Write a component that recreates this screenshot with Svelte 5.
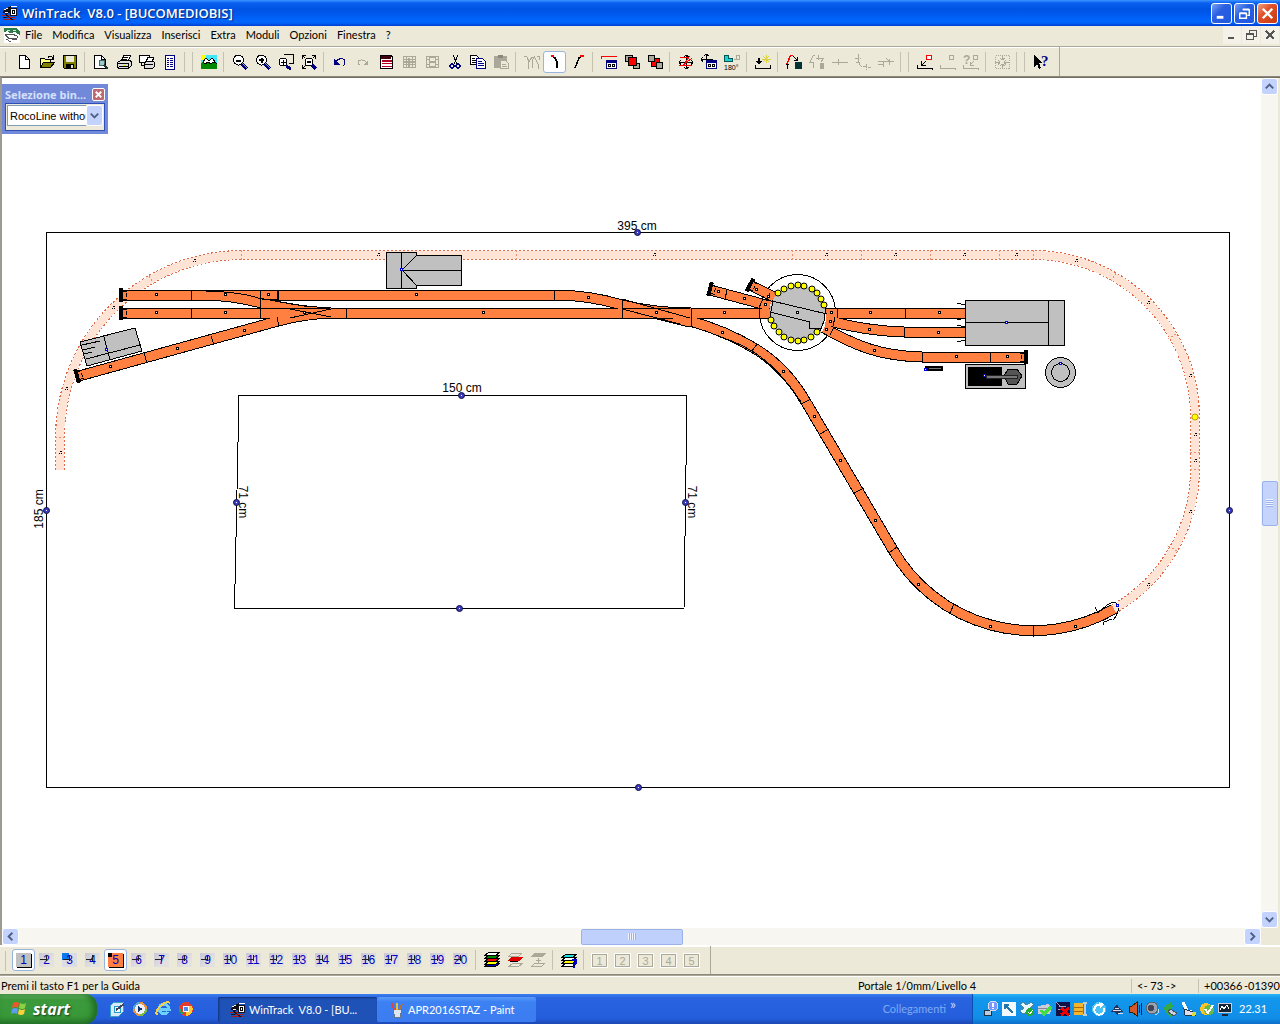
<script lang="ts">
	type Tool = { icon: string; label: string; active?: boolean } | null;

	const menus = ['File', 'Modifica', 'Visualizza', 'Inserisci', 'Extra', 'Moduli', 'Opzioni', 'Finestra', '?'];

	// null is a separator
	const tools: Tool[] = [
		{ icon: 'new', label: 'Nuovo' },
		{ icon: 'open', label: 'Apri' },
		{ icon: 'save', label: 'Salva' },
		null,
		{ icon: 'preview', label: 'Anteprima' },
		{ icon: 'print', label: 'Stampa' },
		{ icon: 'printView', label: 'Stampa vista' },
		{ icon: 'list', label: 'Elenco' },
		null,
		null,
		{ icon: 'landscape', label: 'Vista 3D' },
		null,
		{ icon: 'zoomOut', label: 'Riduci' },
		{ icon: 'zoomIn', label: 'Ingrandisci' },
		{ icon: 'zoomArea', label: 'Zoom area' },
		{ icon: 'zoomAll', label: 'Zoom tutto' },
		null,
		{ icon: 'undo', label: 'Annulla' },
		{ icon: 'redo', label: 'Ripeti' },
		{ icon: 'props', label: 'Caratteristiche' },
		{ icon: 'film', label: 'Dividi' },
		{ icon: 'film2', label: 'Unisci' },
		{ icon: 'cut', label: 'Taglia' },
		{ icon: 'copy', label: 'Copia' },
		{ icon: 'paste', label: 'Incolla' },
		null,
		{ icon: 'branches', label: 'Deviatoio' },
		{ icon: 'curveL', label: 'Curva a sinistra', active: true },
		{ icon: 'curveR', label: 'Curva a destra' },
		null,
		{ icon: 'dialog', label: 'Dialogo' },
		{ icon: 'front', label: 'In primo piano' },
		{ icon: 'back', label: 'In secondo piano' },
		null,
		{ icon: 'move', label: 'Sposta' },
		{ icon: 'moveTo', label: 'Sposta a' },
		{ icon: 'rotate', label: 'Ruota' },
		null,
		{ icon: 'connect', label: 'Collega' },
		null,
		{ icon: 'gap', label: 'Chiudi spazio' },
		{ icon: 'gapOff', label: 'Chiudi' },
		{ icon: 'line', label: 'Linea' },
		{ icon: 'bend', label: 'Piega' },
		{ icon: 'shift', label: 'Trasla' },
		null,
		null,
		{ icon: 'height', label: 'Altezza' },
		{ icon: 'heightOff', label: 'Togli altezza' },
		{ icon: 'heightAsk', label: 'Verifica altezza' },
		null,
		{ icon: 'center', label: 'Centra' },
		null,
		null,
		{ icon: 'help', label: 'Guida' }
	];

	const zoomLens =
		'<circle cx="6.500" cy="6" r="5" fill="#fff" stroke="#000"/><path d="M10 10l5 5" stroke="#000080" stroke-width="3"/><path d="M10 9l5 5" stroke="#8aa" />';
	const window16 =
		'<rect x="5.500" y="6.500" width="10" height="8" fill="#fff" stroke="#000080"/><path d="M5 7h11v2H5z" fill="#000080"/><path d="M7.500 10.500h2v2h-2zM11.500 10.500h2v2h-2z" fill="none" stroke="#000"/>';
	const film =
		'<path d="M2.500 2.500h12v11h-12zM2 5.500h13M2 10.500h13M5.500 2v12M11.500 2v12" fill="none" stroke="#aca899"/>';

	const icons: Record<string, string> = {
		new: '<path d="M3.500 1.500h6l4 4v9h-10z" fill="#fff" stroke="#000"/><path d="M9.500 1.500v4h4" fill="none" stroke="#000"/>',
		open: '<path d="M1.500 13.500v-9h4l1 1h5v3" fill="#ffff80" stroke="#000"/><path d="M1.500 13.500l3-5h11l-4 5z" fill="#808000" stroke="#000"/><path d="M9 3.500c1-2 3-2 5 1M14.500 1v4h-4" fill="none" stroke="#000"/>',
		save: '<path d="M1.500 1.500h13v13h-12l-1-1z" fill="#808000" stroke="#000"/><path d="M4 2h8v6H4z" fill="#ece9d8"/><path d="M4 10h8v4H4z" fill="#000"/><path d="M9 11h2v3H9z" fill="#ddd"/>',
		preview:
			'<path d="M1.500 1.500h7l4 4v9h-11z" fill="#fff" stroke="#000"/><path d="M8.500 1.500v4h4" fill="none" stroke="#000"/><circle cx="9" cy="9" r="3" fill="#9cc" stroke="#466"/><path d="M11 11l4 4" stroke="#233" stroke-width="2"/>',
		print:
			'<path d="M5.500 6.500l2-5h7l-2 5" fill="#fff" stroke="#000"/><path d="M7 3.500h5M6 5.500h5" stroke="#000"/><path d="M1.500 8.500l3-2h9l2 1v4l-3 3h-10l-1-2z" fill="#ddd" stroke="#000"/><path d="M2 9.500h10v4M3 12.500h9" fill="none" stroke="#000"/><path d="M8 11h2v1H8z" fill="#dd0"/>',
		printView:
			'<path d="M.500 1.500h10v7h-10z" fill="#fff" stroke="#000"/><path d="M2.500 8v3h3" fill="none" stroke="#000"/><path d="M7.500 7.500l1-4h6l-1 4" fill="#fff" stroke="#000"/><path d="M5.500 8.500l2-1h7l1 1v4l-2 2h-8z" fill="#ddd" stroke="#000"/><path d="M6 10.500h8" stroke="#000"/>',
		list: '<path d="M3.500 1.500h9v14h-9z" fill="#fff" stroke="#000080"/><path d="M5 4.500h2M8 4.500h3M5 6.500h2M8 6.500h3M5 8.500h2M8 8.500h3M5 10.500h2M8 10.500h3M5 12.500h2M8 12.500h3" stroke="#000080"/>',
		landscape:
			'<path d="M0 1h16v14H0z" fill="#3ee8f8"/><path d="M0 1h5v3L3 6H0z" fill="#ff0"/><path d="M0 9l2-1 3-4 3 3 3-3 5 6v5H0z" fill="#080"/><path d="M2 8l3-4 3 3 3-3 4 5-3-1-2 2-3-2-3 2z" fill="#fff" stroke="#000"/>',
		zoomOut: zoomLens + '<path d="M4 6.500h5" stroke="#000" stroke-width="2"/>',
		zoomIn: zoomLens + '<path d="M4 6h5M6.500 3.500v5" stroke="#000" stroke-width="2"/>',
		zoomArea:
			'<path d="M6 .500h9.500v9H11" fill="none" stroke="#000"/><circle cx="5" cy="8" r="4" fill="#fff" stroke="#000"/><path d="M3 8.500h5M5.500 6v5" stroke="#000"/><path d="M8 12l5 3" stroke="#000080" stroke-width="3"/>',
		zoomAll:
			'<circle cx="8" cy="8" r="4" fill="#fff" stroke="#000"/><path d="M6 8h4" stroke="#000" stroke-width="2"/><path d="M11 11l4 4" stroke="#000080" stroke-width="3"/><path d="M1.500 5V1.500H5M1.500 1.500l3 3M11 1.500h3.500V5M14.500 1.500l-3 3M1.500 11v3.500H5M1.500 14.500l3-3" fill="none" stroke="#000"/>',
		undo: '<path d="M2 5v6h6z" fill="#000080"/><path d="M4 8c3-5 9-4 9 0 0 2-1 3-2 4" fill="none" stroke="#000080"/>',
		redo: '<path d="M13 6v5H8z" fill="#aca899"/><path d="M12 9c-3-4-8-4-9-1 0 2 1 3 2 3" fill="none" stroke="#aca899"/>',
		props: '<path d="M2.500 1.500h11l1 2v11h-12z" fill="#fff" stroke="#000"/><path d="M3 2h10v3H3z" fill="#400010"/><path d="M4 7h10M4 9.500h10M4 12.500h10" stroke="#b00020" stroke-width="1.500"/>',
		film: film + '<path d="M2 8h5M14 8H9M8 4v9" stroke="#aca899" stroke-width="2"/>',
		film2: film + '<path d="M5.500 3.500h6v9h-6z" fill="#ece9d8" stroke="#aca899"/><path d="M6 8h5" stroke="#aca899" stroke-width="2"/>',
		cut: '<path d="M6 1l4 9M11 1L7 10" stroke="#000" fill="none"/><circle cx="5" cy="12" r="2" fill="none" stroke="#000080" stroke-width="1.500"/><circle cx="11" cy="12" r="2" fill="none" stroke="#000080" stroke-width="1.500"/>',
		copy: '<path d="M.500 1.500h6l2 2v7h-8z" fill="#fff" stroke="#000"/><path d="M2 4.500h3M2 6.500h5M2 8.500h5" stroke="#000"/><path d="M6.500 4.500h6l3 3v7h-9z" fill="#fff" stroke="#000080"/><path d="M8 7.500h4M8 9.500h6M8 11.500h6" stroke="#000080"/>',
		paste: '<path d="M1 2h13v12H1z" fill="#aca899"/><path d="M5 1h5v3H5z" fill="#8c897c"/><path d="M7.500 6.500h5l3 3v5h-8z" fill="#ece9d8" stroke="#aca899"/><path d="M9 10.500h4M9 12.500h5" stroke="#aca899"/>',
		branches:
			'<path d="M0 2l3 1 2 5 3-5h3M4 15V8M11 2l-3 5 1 7M11 4l3 6v5M13 2h2v4" fill="none" stroke="#aca899"/>',
		curveL: '<path d="M5 2l3 2 2 4v6" fill="none" stroke="#000" stroke-width="1.500"/><path d="M4 1h3v2H4z" fill="red"/>',
		curveR: '<path d="M12 2L9 4 7 9l-2 5" fill="none" stroke="#000" stroke-width="1.500"/><path d="M10 1h4v2h-4z" fill="red"/>',
		dialog: '<path d="M.500 5V2.500h15" fill="none" stroke="red"/>' + window16,
		front: '<path d="M1.500 1.500h7v6h-7zM9.500 9.500h6v5h-6z" fill="#aca899" stroke="#000"/><path d="M4.500 3.500h8v8h-8z" fill="red" stroke="#000"/>',
		back: '<path d="M4.500 4.500h8v8h-8z" fill="red" stroke="#000"/><path d="M1.500 1.500h6v6h-6zM9.500 8.500h6v6h-6z" fill="#aca899" stroke="#000"/>',
		move: '<path d="M8.500 1v14M1 8.500h14M6 3l2-2 3 2M6 13l2 2 3-2M3 6L1 8l2 3M13 6l2 2-2 3" fill="none" stroke="#000"/><path d="M2 4l9-1-6 9M14 4L4 12M1 12l13-1" fill="none" stroke="red"/>',
		moveTo: '<path d="M5.500 0v12M0 5.500h12M3 2l2-2 3 2M2 3L0 5l2 3" fill="none" stroke="#000"/>' + window16,
		rotate:
			'<path d="M.500 1.500h4v3h4v3h-8z" fill="#20d0d0" stroke="#055"/><path d="M10 5.500h2v-4h3v4h-3" fill="none" stroke="#aca899"/><text x="0" y="16" font-size="7" font-family="Liberation Sans">180°</text>',
		connect:
			'<path d="M.500 11v3.500h15V11M4 4v6" fill="none" stroke="#000" stroke-width="1.500"/><path d="M1 7h6l-3 4z" fill="#000"/><path d="M11.500 1v8M7 5.500h9M8 2l6 6M14 2L8 8" stroke="#d8d040"/>',
		gap: '<path d="M7 1.500H4.500L1 10" fill="none" stroke="red" stroke-width="1.500"/><path d="M0 10.500h3M1.500 10v5" fill="none" stroke="#000"/><path d="M7 2l4 4M11.500 3v3.500H8" fill="none" stroke="#000"/><path d="M9 8h7v7H9z" fill="#033"/>',
		gapOff: '<path d="M6 1L4 2 1 8h3v6M9 1v5M7 4h8l-3 4" fill="none" stroke="#aca899"/><path d="M11 9h4v6h-4z" fill="#aca899"/>',
		line: '<path d="M0 8.500h16M6.500 5v6" stroke="#aca899"/>',
		bend: '<path d="M3 0v8l3 4 10 2M0 4h6M11 10v6M1 8h4" fill="none" stroke="#aca899" stroke-dasharray="4 1"/>',
		shift: '<path d="M0 7.500h10M0 10.500h6M11.500 5v6M8 4l3 3M5.500 7v6M10 7.500h6" fill="none" stroke="#aca899"/>',
		height:
			'<path d="M9.500 1.500h5v4h-5z" fill="#fff" stroke="red" stroke-width="1.500"/><path d="M9 7l-4 4M4.500 7v4H9" fill="none" stroke="#000"/><path d="M.500 11v3.500h15V16" fill="none" stroke="#000" stroke-width="1.500"/>',
		heightOff: '<path d="M9.500 1.500h4v4h-4zM.500 11v3.500h15V16" fill="none" stroke="#aca899"/>',
		heightAsk:
			'<path d="M10.500 1.500h4v4h-4zM11 7l-4 4M7.500 8v3H11M.500 11v3.500h15V16" fill="none" stroke="#aca899"/><text x="0" y="10" font-size="12" font-weight="bold" font-family="Liberation Sans" fill="#aca899">?</text>',
		center:
			'<path d="M1.500 1.500h14v13h-14z" fill="none" stroke="#aca899" stroke-dasharray="1 1"/><path d="M8.500 1v5M8.500 15v-5M1 8.500h5M15 8.500h-5M6 4l2 2 3-2M6 12l2-2 3 2M4 6l2 2-2 3M12 6l-2 2 2 3" fill="none" stroke="#aca899"/>',
		help: '<path d="M1 1v12l3-3 2 5 2-1-2-5h4z" fill="#000"/><text x="8" y="12" font-size="15" font-weight="bold" font-family="Liberation Serif" fill="#000080">?</text>'
	};

	const levels = Array.from({ length: 20 }, (_, i) => i + 1);

	const layer = (y: number, c: string) =>
		`<path d="M4.500 ${y}.500h11l-4 3h-11z" fill="${c}" stroke="#000"/>`;
	const layerIcons = [
		{ label: 'Tutti i livelli', svg: layer(11, '#0000c0') + layer(9, '#ff0') + layer(6, '#f00') + layer(3, '#080') + layer(0, '#fff') },
		{ label: 'Livello attivo', svg: '<path d="M4.500 1.500h10l-3 3h-10zM5.500 11.500h10l-4 3h-10z" fill="#ece9d8" stroke="#aca899"/><path d="M4 5h12l-4 4H0z" fill="#e00000"/><path d="M3 9.500h8" stroke="#000"/>' },
		{ label: 'Livello superiore', svg: '<path d="M5 1h11l-4 4H0z" fill="#aca899"/><path d="M8.500 6v6M6 8.500h5M4.500 11.500h10l-3 3h-10z" fill="none" stroke="#aca899"/>' }
	];
	const layerHelp =
		layer(11, '#fff') + layer(8, '#ff0') + layer(5, '#fff') + layer(2, '#20e0e0') +
		'<path d="M11 8h4v3h-2v2M13 14v2" fill="none" stroke="#0000d0" stroke-width="2"/>';

	const handles = [
		[637, 232], [638, 787], [46, 510], [1229, 510], [461, 395], [459, 608], [236, 502], [685, 502]
	];

	// centre lines of the tracks on the active level
	const tracks = [
		'M79 376L278 321Q304 314 331 313',
		'M206 295Q236 296 261 303Q292 311 331 313',
		'M121 295H554Q589 295 622 305L690 322',
		'M622 305Q656 313 691 313',
		'M690 321C712 327 734 336 754 348C776 361 792 378 806 402L893 550A162 162 0 0 0 1114 609',
		'M121 313H770',
		'M710 290L770 306',
		'M750 285L776 298',
		'M826 313H965',
		'M826 320Q865 331 904 332H965',
		'M824 328C856 346 880 356 922 357H1027'
	];
	const shadow = 'M60 470V437A182 182 0 0 1 242 255H1033A162 162 0 0 1 1195 417V469A162 162 0 0 1 1114 609';

	const joints =
		'M191.500 290v10M260.500 290v10M277.500 290v10M278.500 290v10M191.500 308v10M260.500 308v10M346.500 308v10M554.500 290v10M622.500 300v18M691.500 308v18M144 353l3 10M211 336l3 9M277 317l2 9M260 298l1 10M752 351l5 -7M801 404l10 -5M820 434l9 -5M854 493l10 -5M889 553l8 -6M950 613l4 -9M1033.500 626v11M727 290l-2 9M764 296l-5 12M770 293l-4 8M837.500 308v10M835 317l-2 9M834 327l-4 8M905.500 308v10M904.500 327v10M922.500 352v10M990.500 352v10';
	const shadowJoints =
		'M55 437h10M149 276l5 8M241.500 250v10M516.500 250v10M792.500 250v10M861.500 250v10M930.500 250v10M999.500 250v10M1033.500 250v10M1116 273l-5 8M1176 334l-8 5M1190 417h10M1190 452h10M1190 469h10M1177 551l-9 -5';

	const points = [
		[156, 294], [225, 294], [268, 294], [156, 312], [225, 312], [304, 312], [244, 330], [177, 348], [110, 366],
		[416, 294], [483, 312], [588, 297], [656, 312], [724, 312], [722, 332], [783, 371], [814, 416], [840, 460],
		[875, 520], [918, 584], [990, 626], [1075, 626], [718, 291], [744, 298], [756, 289], [768, 296], [765, 304],
		[831, 312], [830, 321], [826, 329], [870, 312], [939, 312], [869, 329], [938, 332], [874, 350], [956, 356],
		[1007, 356], [797, 312]
	];
	const shadowPoints = [
		[60, 452], [66, 388], [113, 307], [194, 260], [378, 254], [654, 254], [826, 254], [895, 254], [964, 254],
		[1016, 254], [1076, 260], [1148, 302], [1190, 375], [1195, 434], [1195, 460], [1190, 511], [1148, 584]
	];
	const lamps = [
		[778, 293], [784, 289], [791, 286], [798, 285], [804, 286], [812, 289], [817, 293], [821, 299], [824, 305],
		[771, 320], [774, 326], [779, 332], [784, 337], [791, 340], [798, 341], [804, 340], [811, 337], [817, 332]
	];
	const buffers = [
		[121, 295, 0], [121, 313, 0], [77, 376, -15], [710, 289, 15], [750, 285, 27], [1026, 357, 180]
	];

	const tray: { label: string; svg: string }[] = [
		{ label: 'Rete', svg: '<path d="M1 9h7v5H1z" fill="#bcd" stroke="#234"/><circle cx="10" cy="5" r="5" fill="#7b96ff" stroke="#dde"/><path d="M10 2v4M10 7v1" stroke="#fff" stroke-width="2"/>' },
		{ label: 'Strumenti', svg: '<path d="M1 1h14v14H1z" fill="#f4f8ff"/><path d="M5 5l7 7M4 8V4h4" fill="none" stroke="#27a" stroke-width="2"/>' },
		{ label: 'Dropbox', svg: '<path d="M4 1l4 3 4-3 3 3-4 3 4 3-4 3-3-2-4 2-3-3 4-3-4-3z" fill="#e8f4ff" stroke="#48a"/><circle cx="11" cy="11" r="4" fill="#2a3"/><path d="M9 11l2 2 3-4" fill="none" stroke="#fff"/>' },
		{ label: 'Rimozione sicura', svg: '<path d="M1 5l10-2 4 3-2 7H1z" fill="#ccd"/><path d="M1 7h10" stroke="#889"/><path d="M4 9l3 4 7-7" fill="none" stroke="#4d4" stroke-width="3"/>' },
		{ label: 'Scheda video', svg: '<path d="M1 1h14v14H1z" fill="#114"/><path d="M1 1l14 14M4 5h7M3 8h8" stroke="#9ad"/><path d="M6 7l8 7M14 7l-8 7" stroke="#e00" stroke-width="3"/>' },
		{ label: 'Archivio', svg: '<path d="M1 2h9v12H1z" fill="#f3b52c"/><path d="M1 6h9M1 10h9" stroke="#a60"/><path d="M12 1v14M10 2h4M10 14h4" stroke="#bcd" stroke-width="2"/>' },
		{ label: 'Aggiornamento', svg: '<circle cx="8" cy="8" r="7" fill="#4bc3f2"/><path d="M10 4a5 5 0 1 0 3 3" fill="none" stroke="#fff" stroke-width="2"/><path d="M8 1l5 2-4 4z" fill="#fff"/>' },
		{ label: 'Dispositivo', svg: '<path d="M1 11l4-4 3-4 2 4 5 4h-4l-2 3-4-3z" fill="#235"/><path d="M4 9h8M6 7h4M9 12h5" stroke="#dde"/>' },
		{ label: 'Volume', svg: '<path d="M2 5h3l5-4v14l-5-4H2z" fill="#d4572a" stroke="#320"/><path d="M12.500 4v8M14.500 2v12" stroke="#222"/>' },
		{ label: 'Altoparlante', svg: '<circle cx="7" cy="7" r="6" fill="#9aa4ae" stroke="#567"/><circle cx="6" cy="7" r="3" fill="#445"/><path d="M10 14q4-1 4-6" fill="none" stroke="#bdf"/>' },
		{ label: 'Chiave USB', svg: '<path d="M1 6l7-5 2 4-3 4 5 5-4 2-6-5z" fill="#3a4"/><path d="M7 8l7 4-3 3-6-4z" fill="#ccd" stroke="#456"/>' },
		{ label: 'Tavoletta', svg: '<path d="M2 1l4 9 5 1" fill="none" stroke="#fff" stroke-width="3"/><path d="M3 8l9 3 2 3H4z" fill="#dde" stroke="#234"/><circle cx="13" cy="13" r="2" fill="#dd3"/>' },
		{ label: 'Antivirus', svg: '<circle cx="7" cy="8" r="6" fill="#f8c22a"/><circle cx="10" cy="9" r="5" fill="#6b4"/><path d="M6 8l3 4 5-8" fill="none" stroke="#fff" stroke-width="2"/>' },
		{ label: 'Monitor', svg: '<path d="M1.500 2.500h13v9h-13z" fill="#123" stroke="#ccd"/><path d="M3 9l2-4 2 3 3-4 2 4" fill="none" stroke="#fff"/><path d="M5 14h6" stroke="#223" stroke-width="2"/>' }
	];

	const quick: { label: string; svg: string }[] = [
		{ label: 'Mostra desktop', svg: '<path d="M1 5l4-4h9v10l-4 4H1z" fill="#d8ecf8" stroke="#3aa0c8"/><path d="M5 5h6v6H5z" fill="#fff" stroke="#29c"/><path d="M7 9l8-6" stroke="#445" stroke-width="2"/>' },
		{ label: 'Media Player', svg: '<circle cx="8" cy="8" r="7" fill="#e8943a"/><path d="M1 8a7 7 0 0 1 7-7v7z" fill="#5ac"/><path d="M8 15a7 7 0 0 0 7-7H8z" fill="#7b4"/><circle cx="8" cy="8" r="5" fill="#eef"/><path d="M6 5l5 3-5 3z" fill="#136"/>' },
		{ label: 'Internet Explorer', svg: '<path d="M13 11a5 5 0 1 1 1-3H4" fill="none" stroke="#6cd0f8" stroke-width="3"/><path d="M2 14C-1 9 10-1 15 2" fill="none" stroke="#f4cf4a" stroke-width="2"/>' },
		{ label: 'Chrome', svg: '<circle cx="8" cy="8" r="7" fill="#e33b2e"/><path d="M1 5l5 9a7 7 0 0 1-5-9z" fill="#2ca24c"/><path d="M8 15a7 7 0 0 0 6-10H8z" fill="#fc3"/><circle cx="8" cy="8" r="3" fill="#4a8af4" stroke="#fff"/>' }
	];

	const appIcon =
		'<path d="M0 7l3-3 6-3-1 7-4 1z" fill="#101010"/><path d="M2 5l4-2M3 7h3" stroke="#eee"/><path d="M0 10.500h9M2 12.500h5M8 12.500h5M1 14.500h12" stroke="#b01818"/><path d="M3 9l8 6M1 12h4" stroke="#111"/><path d="M8.500 3.500h6v7h-6z" fill="#fff" stroke="#112"/><path d="M10.500 5.500h2v3h-2z" fill="none" stroke="#000"/><path d="M9 1.500h6" stroke="#fff"/>';

	const docIcon =
		'<path d="M0 0h16v16H0z" fill="#fff"/><path d="M0 1h12l4 3v4l-5-3-5 1-3-2-3 1z" fill="#2f7a4a"/><path d="M3 3l3 1M9 3h3" stroke="#cfe8cf"/><path d="M1 7h7l5 2v2l-4 1-5-1M3 10l7 3 3-1M2 12l5 3M1 8l3 2" fill="none" stroke="#555"/>';
	const paintIcon =
		'<path d="M4.500 7.500h8l-1 8h-6z" fill="#dbe6f2" stroke="#678"/><path d="M5 8L3 1" stroke="#d44" stroke-width="2"/><path d="M8 8V1" stroke="#e8c040" stroke-width="2"/><path d="M10 8l3-6" stroke="#b87030" stroke-width="2"/>';

	let library = $state('RocoLine without');
	let level = $state(5);
</script>

{#snippet icon(svg: string)}
	<svg class="icon" viewBox="0 0 16 16" width="16" height="16" aria-hidden="true">{@html svg}</svg>
{/snippet}

<div class="screen">
	<header class="titlebar">
		{@render icon(appIcon)}
		<h1>WinTrack&nbsp; V8.0 - [BUCOMEDIOBIS]</h1>
		<button class="win" aria-label="Riduci a icona"><svg viewBox="0 0 20 20"><path d="M5 14h7" stroke="#fff" stroke-width="3" /></svg></button>
		<button class="win" aria-label="Ripristina"><svg viewBox="0 0 20 20"><path d="M8 6h7v6h-2M8 5.500h7M5 10h7v5H5zM5 9.500h7" fill="none" stroke="#fff" stroke-width="1.500" /></svg></button>
		<button class="win close" aria-label="Chiudi"><svg viewBox="0 0 20 20"><path d="M5 5l10 10M15 5L5 15" stroke="#fff" stroke-width="2.500" /></svg></button>
	</header>

	<nav class="menubar">
		<span class="doc">{@render icon(docIcon)}</span>
		{#each menus as menu}
			<button>{menu}</button>
		{/each}
		<span class="grow"></span>
		<button class="mdi" aria-label="Riduci documento"><svg viewBox="0 0 16 16"><path d="M4 11h6" stroke="#555" stroke-width="2" /></svg></button>
		<button class="mdi" aria-label="Ripristina documento"><svg viewBox="0 0 16 16"><path d="M6 6V3h7v6h-2M6 3.500h7M3.500 6.500h7v6h-7zM3 7.500h8" fill="none" stroke="#555" /></svg></button>
		<button class="mdi" aria-label="Chiudi documento"><svg viewBox="0 0 16 16"><path d="M4 4l8 8M12 4l-8 8" stroke="#555" stroke-width="2" /></svg></button>
	</nav>

	<div class="toolbar">
		<div class="band">
			{#each tools as tool}
				{#if tool}
					<button class="tool" class:active={tool.active} aria-label={tool.label}>
						{@render icon(icons[tool.icon])}
					</button>
				{:else}
					<span class="sep"></span>
				{/if}
			{/each}
		</div>
	</div>

	<main class="workspace">
		<svg class="plan" viewBox="2 78 1259 850" preserveAspectRatio="xMidYMid meet" role="img" aria-label="Piano binari">
			<g class="ink">
				<path d="M46.500 232.500h1183v555h-1183z" />
				<path d="M239 395.500H687L684 608.500H234.500z" />
			</g>

			<path d={shadow} class="shadow-edge" />
			<path d={shadow} class="shadow-bed" />
			<path d={shadowJoints} class="shadow-joint" />
			{#each shadowPoints as [x, y]}
				<path d="M{x - 1} {y + 1.5}h1M{x} {y - 0.5}h2M{x + 1} {y + 1.5}h1" class="ink" />
			{/each}
			<circle cx="1195" cy="417" r="3" fill="#ffff00" class="round amber" />

			<g class="building">
				<path d="M80 342L135 328L142 351L87 366z" />
				<path d="M104 337l6 23M86 359l54 -14M82 345l18 -4M83 350l12 -3M84 354l8 -2" />
				<path d="M386.500 252.500h30v3h45v30h-45v3h-30z" />
				<path d="M401.500 252v36M401 270.500h60M402 270l15 -15M402 270l15 16" />
				<path d="M965.500 300.500h99v45h-99z" />
				<path d="M1048.500 300v45M965 322.500h83M957 303l8 2M957 320l8 -2M957 325l8 2M957 342l8 -2" />
				<path d="M965.500 364.500h60v24h-60z" />
				<circle cx="1060.500" cy="372.500" r="15" />
				<circle cx="1060.500" cy="372.500" r="9" />
			</g>
			<path d="M968 367h34v19h-34z" fill="#000" />
			<path d="M1008 369h9l5 7-5 8h-9l-4-8z" fill="#555" stroke="#000" />
			<path d="M986 375h31v3h-31z" fill="#777" stroke="#222" />
			<path d="M925 366h18v5h-18z" fill="#000" />
			<path d="M929 368.500h12" stroke="#777" />

			<circle cx="797.500" cy="312.500" r="38" class="ring" />
			{#each tracks as d}
				<path {d} class="rail" />
			{/each}
			{#each tracks as d}
				<path {d} class="bed" />
			{/each}
			<path d={joints} class="ink" />
			<path d="M206 291Q240 292 258 298M258 298L310 307M285 308L331 317M290 318L331 309M622 299L690 318M622 309L680 324M720 337C750 346 775 362 801 402" class="ink" />
			<path d="M261 308.500h69M262 299.500h16M623 308.500h67M623 318.500h50" class="ink" />

			<circle cx="797.500" cy="313" r="28" fill="#c0c0c0" />
			<path d="M772 301L827 314M770 312L810 322L809 328L822 329" class="ink" />
			<path d="M759.500 308v10h10M773 300l-3 17M826 308l-2 13-4 10" class="ink" />
			{#each lamps as [x, y]}
				<circle cx={x} cy={y} r="3" fill="#ffff00" class="round" />
			{/each}

			{#each buffers as [x, y, a]}
				<g transform="translate({x} {y}) rotate({a})">
					<path d="M-2 -7h4v14h-4z" fill="#000" />
					<path d="M2 -4h4M2 4h4M5 -2v4" stroke="#000" />
				</g>
			{/each}

			{#each points as [x, y]}
				<rect x={x - 0.5} y={y - 0.5} width="2" height="2" class="dot" />
			{/each}
			<path d="M1095 607l3 6 8-7q10-8 12 1 1 7-5 13M1103 625l1-3 8-3" class="ink" />
			{#each [[401, 269], [106, 349], [1006, 322], [984, 375], [925, 369], [1060, 363], [1117, 605]] as [x, y]}
				<rect x={x - 0.5} y={y - 0.5} width="2" height="2" class="dot blue" />
			{/each}

			{#each handles as [x, y]}
				<circle cx={x + 0.5} cy={y + 0.5} r="3" class="round handle" />
				<path d="M{x} {y + 0.5}h1" stroke="#fff" />
			{/each}

			<g class="dims">
				<text x="637" y="230">395 cm</text>
				<text x="462" y="392">150 cm</text>
				<text transform="translate(43 509) rotate(-90)">185 cm</text>
				<text transform="translate(239 502) rotate(90)">71 cm</text>
				<text transform="translate(688 502) rotate(90)">71 cm</text>
			</g>
		</svg>

		<div class="scroll vertical">
			<button aria-label="Scorri su"><svg viewBox="0 0 16 16"><path d="M4 10l4-4 4 4" /></svg></button>
			<span class="track"><span class="thumb"></span></span>
			<button aria-label="Scorri giù"><svg viewBox="0 0 16 16"><path d="M4 6l4 4 4-4" /></svg></button>
		</div>
		<div class="scroll horizontal">
			<button aria-label="Scorri a sinistra"><svg viewBox="0 0 16 16"><path d="M10 4L6 8l4 4" /></svg></button>
			<span class="track"><span class="thumb"></span></span>
			<button aria-label="Scorri a destra"><svg viewBox="0 0 16 16"><path d="M6 4l4 4-4 4" /></svg></button>
		</div>

		<section class="palette">
			<div class="palette-title">
				<h2>Selezione bin...</h2>
				<button aria-label="Chiudi selezione"><svg viewBox="0 0 12 12"><path d="M3 3l6 6M9 3l-6 6" stroke="#fff" stroke-width="2" /></svg></button>
			</div>
			<div class="palette-body">
				<select bind:value={library} aria-label="Libreria binari">
					<option>RocoLine without</option>
					<option>RocoLine with</option>
				</select>
				<span class="arrow"><svg viewBox="0 0 16 16"><path d="M4 6l4 4 4-4" /></svg></span>
			</div>
		</section>
	</main>

	<div class="toolbar levels">
		<div class="band">
			{#each levels as n}
				<button
					class="tool level"
					class:active={n === 1 || n === 5}
					class:current={n === level}
					onclick={() => (level = n)}
				>
					<span class:blue={n === 3}>{n}</span>
				</button>
			{/each}
			<span class="sep"></span>
			{#each layerIcons as l}
				<button class="tool" aria-label={l.label}>{@render icon(l.svg)}</button>
			{/each}
			<span class="sep"></span>
			<button class="tool" aria-label="Info livelli">{@render icon(layerHelp)}</button>
			<span class="sep"></span>
			{#each [1, 2, 3, 4, 5] as n}
				<button class="tool view" disabled><span>{n}</span></button>
			{/each}
		</div>
	</div>

	<footer class="status">
		<span>Premi il tasto F1 per la Guida</span>
		<span>Portale 1/0mm/Livello 4</span>
		<span class="cell">&lt;- 73 -&gt;</span>
		<span class="cell">+00366</span>
		<span>-01390</span>
	</footer>

	<div class="taskbar">
		<button class="start">
			<svg viewBox="0 0 20 20" width="20" height="20" aria-hidden="true">
				<path d="M3 4q3-2 6 0L8 9q-3-2-6 0z" fill="#f0562a" />
				<path d="M10 4q3 2 6 0l-1 5q-3 2-6 0z" fill="#8cd048" />
				<path d="M2 10q3-2 6 0l-1 5q-3-2-6 0z" fill="#5a9cf0" />
				<path d="M9 10q3 2 6 0l-1 5q-3 2-6 0z" fill="#fcd03a" />
			</svg>
			start
		</button>
		<div class="quick">
			{#each quick as q}
				<button aria-label={q.label}>{@render icon(q.svg)}</button>
			{/each}
		</div>
		<button class="task pressed">{@render icon(appIcon)} WinTrack&nbsp; V8.0 - [BU...</button>
		<button class="task">{@render icon(paintIcon)} APR2016STAZ - Paint</button>
		<span class="grow"></span>
		<span class="links">Collegamenti <span>»</span></span>
		<div class="tray">
			{#each tray as t}
				<button aria-label={t.label}>{@render icon(t.svg)}</button>
			{/each}
			<time>22.31</time>
		</div>
	</div>
</div>

<style>
	:global(body) {
		margin: 0;
	}

	.screen {
		display: flex;
		flex-direction: column;
		height: 100vh;
		background: #ece9d8;
		color: #000;
		font-family: Lato, 'Open Sans', sans-serif;
		font-size: 11px;
		line-height: 14px;
		overflow: hidden;
	}

	.screen * {
		box-sizing: border-box;
	}

	button {
		display: flex;
		align-items: center;
		justify-content: center;
		flex: none;
		margin: 0;
		padding: 0;
		border: 0;
		background: none;
		color: inherit;
		font: inherit;
		white-space: nowrap;
	}

	h1,
	h2 {
		margin: 0;
		font-family: 'Noto Sans', 'Open Sans', sans-serif;
	}

	.icon {
		display: block;
		flex: none;
		overflow: visible;
		shape-rendering: crispEdges;
	}

	.grow {
		flex: 1;
	}

	/* title bar */
	.titlebar {
		display: flex;
		align-items: center;
		gap: 2px;
		flex: none;
		height: 26px;
		padding: 0 2px;
		background: linear-gradient(#3c94ff 0, #0a5ff0 3px, #0054e3 9px, #0058ee 14px, #0066ff 21px, #0062f8 23px, #003dd0 26px);
	}

	.titlebar h1 {
		flex: 1;
		padding-left: 2px;
		color: #fff;
		font-family: 'Open Sans', 'Noto Sans', sans-serif;
		font-size: 13px;
		line-height: 20px;
		font-weight: 600;
		text-shadow: 1px 1px 1px #0a2a80;
	}

	.win {
		width: 21px;
		height: 21px;
		border: 1px solid #fff;
		border-radius: 3px;
		background: linear-gradient(135deg, #7a9ff5, #2a5fe0 40%, #2058e0);
	}

	.win svg {
		width: 19px;
	}

	.win.close {
		background: linear-gradient(135deg, #f0a080, #e0502a 40%, #c83a10);
	}

	/* menu bar */
	.menubar {
		display: flex;
		align-items: center;
		gap: 10px;
		flex: none;
		height: 20px;
		padding: 0 0 2px 4px;
	}

	.doc {
		margin-right: -5px;
	}

	.mdi {
		width: 18px;
		height: 18px;
		margin-left: -9px;
		background: #f4f2e8;
	}

	.mdi:last-child {
		margin-right: 1px;
	}

	.mdi svg {
		width: 16px;
		shape-rendering: crispEdges;
	}

	/* tool bars */
	.toolbar {
		display: flex;
		flex: none;
		height: 31px;
		border-top: 1px solid #aca899;
		border-bottom: 1px solid #8c897c;
		background: #ece9d8;
		box-shadow: inset 0 1px #fff;
	}

	.band {
		display: flex;
		align-items: center;
		padding: 0 7px 0 12px;
		border-right: 1px solid #aca899;
		background: linear-gradient(#c5c2b2, #c5c2b2) 5px 5px / 1px 20px no-repeat;
	}

	.tool {
		width: 23px;
		height: 22px;
	}

	.tool.active {
		border: 1px solid #98b5e2;
		border-radius: 3px;
		background: #fff;
	}

	.sep {
		width: 1px;
		height: 20px;
		margin: 0 4px 0 3px;
		background: #c5c2b2;
	}

	.levels {
		height: 30px;
		border-top: 1px solid #fff;
		font-family: 'Liberation Sans', Arial, sans-serif;
	}

	.level span {
		position: relative;
		width: 15px;
		height: 14px;
		background: linear-gradient(135deg, #c8c8d8, #e4e2e0 70%);
		color: #0000c0;
		font-size: 12px;
		line-height: 15px;
	}

	.level span::before {
		content: '';
		position: absolute;
		left: 1px;
		top: 6px;
		width: 7px;
		height: 1px;
		background: #222;
	}

	.level span::after {
		content: '';
		position: absolute;
		left: 7px;
		top: 2px;
		width: 1px;
		height: 6px;
		background: #222;
	}

	.level span.blue {
		background: linear-gradient(#0a78f0, #0a78f0) 0 0 / 7px 7px no-repeat #dcdce4;
	}

	.level.active span {
		background: #c0c0c0;
		box-shadow: 1px 1px #000;
	}

	.level.active span::before,
	.level.active span::after {
		display: none;
	}

	.level.current span {
		background: linear-gradient(#000, #000) 0 0 / 4px 4px no-repeat #ff8040;
	}

	.view span {
		width: 15px;
		height: 13px;
		border: 1px solid #aca899;
		outline: 1px solid #fff;
		color: #aca899;
		line-height: 12px;
	}

	/* work area */
	.workspace {
		position: relative;
		display: grid;
		grid-template: minmax(0, 1fr) 17px / minmax(0, 1fr) 17px;
		flex: 1;
		min-height: 0;
		padding-right: 2px;
		border-top: 1px solid #716f64;
		border-left: 2px solid #9d9b90;
	}

	.plan {
		width: 100%;
		height: 100%;
		background: #fff;
		shape-rendering: crispEdges;
	}

	.plan path {
		fill: none;
	}

	.ink,
	.ring {
		fill: none;
		stroke: #000;
	}

	.rail {
		stroke: #000;
		stroke-width: 11;
	}

	.bed {
		stroke: #ff8040;
		stroke-width: 9;
	}

	.shadow-edge {
		stroke: #e06a48;
		stroke-width: 10;
		stroke-dasharray: 2 2;
	}

	.shadow-bed {
		stroke: #ffe4d6;
		stroke-width: 8;
	}

	.shadow-joint {
		stroke: #e89070;
		stroke-dasharray: 2 2;
	}

	.plan path[fill] {
		fill: revert-layer;
	}

	.building path,
	.building circle {
		fill: #c0c0c0;
		stroke: #000;
	}

	.building path:nth-child(even) {
		fill: none;
	}

	.dot {
		fill: #fff;
		stroke: #000;
	}

	.dot.blue {
		stroke: #0000e0;
	}

	.round {
		stroke: #000;
		shape-rendering: geometricPrecision;
	}

	.amber {
		stroke: #c0a000;
	}

	.handle {
		fill: #3c3cc0;
		stroke: #101040;
	}

	.dims {
		font-family: 'Liberation Sans', Arial, sans-serif;
		font-size: 12px;
		text-anchor: middle;
	}

	.scroll {
		display: flex;
		background: #f7f6f0;
	}

	.vertical {
		flex-direction: column;
	}

	.scroll button,
	.arrow {
		width: 17px;
		height: 17px;
		border: 1px solid #fff;
		border-radius: 3px;
		background: #c3d3fd;
	}

	.scroll svg,
	.arrow svg {
		display: block;
		width: 15px;
		fill: none;
		stroke: #4d6185;
		stroke-width: 2;
	}

	.track {
		display: flex;
		flex: 1;
		align-items: center;
		justify-content: center;
	}

	.thumb {
		width: 16px;
		height: 45px;
		border: 1px solid #9ab2ec;
		border-radius: 2px;
		background:
			repeating-linear-gradient(#eef3ff 0 1px, #9ab2ec 1px 2px) center / 7px 8px no-repeat,
			#c5d4fc;
	}

	.horizontal .thumb {
		width: 102px;
		height: 16px;
		background:
			repeating-linear-gradient(90deg, #eef3ff 0 1px, #9ab2ec 1px 2px) center / 8px 7px no-repeat,
			#c0d0fc;
	}

	/* floating palette */
	.palette {
		position: absolute;
		left: 0;
		top: 6px;
		width: 106px;
		padding: 2px 3px 3px;
		background: #7288d8;
	}

	.palette-title {
		display: flex;
		align-items: center;
		justify-content: space-between;
		height: 17px;
	}

	.palette h2 {
		color: #d4e0fc;
		font-size: 11px;
		line-height: 16px;
		white-space: nowrap;
	}

	.palette-title button {
		width: 13px;
		height: 13px;
		border: 1px solid #fff;
		border-radius: 2px;
		background: #bf6a72;
	}

	.palette-title svg {
		width: 11px;
	}

	.palette-body {
		display: flex;
		height: 28px;
		padding: 1px 1px 4px;
		background: #ece9d8;
		border: 1px solid #2c50b8;
	}

	.palette select {
		flex: 1;
		min-width: 0;
		padding: 1px 0 0 2px;
		border: 1px solid #7f9db9;
		border-right: 0;
		border-radius: 0;
		appearance: none;
		background: #fff;
		color: #000;
		font: inherit;
		font-family: 'Liberation Sans', Arial, sans-serif;
		text-overflow: clip;
	}

	.arrow {
		height: auto;
		display: flex;
		align-items: center;
	}

	/* status bar */
	.status {
		display: grid;
		grid-template-columns: 1fr 274px 67px 43px 39px;
		align-items: center;
		flex: none;
		height: 19px;
		padding-top: 1px;
		border-top: 1px solid #aca899;
		box-shadow: inset 0 1px #fff;
	}

	.status span {
		padding-left: 1px;
		white-space: nowrap;
	}

	.status span:last-child {
		padding-left: 3px;
	}

	.status .cell {
		padding-left: 5px;
		border-left: 1px solid #c5c2b2;
	}

	/* task bar */
	.taskbar {
		display: flex;
		flex: none;
		height: 30px;
		background: linear-gradient(#3a80f0, #2a63e0 4px, #245edc 24px, #1c48b4);
		color: #fff;
	}

	.start {
		justify-content: flex-start;
		gap: 3px;
		width: 97px;
		padding-left: 10px;
		border-radius: 0 12px 12px 0;
		background: linear-gradient(#6cb86a, #3c9a3c 6px, #389838 22px, #2a7a2c);
		box-shadow: inset -4px 0 6px #1e6a22;
		font-family: 'Noto Sans', 'Open Sans', sans-serif;
		font-size: 16px;
		line-height: 20px;
		font-weight: bold;
		font-style: italic;
		text-shadow: 1px 1px 2px #1a3a1a;
	}

	.quick {
		display: flex;
		gap: 7px;
		width: 121px;
		padding-left: 12px;
	}

	.task {
		justify-content: flex-start;
		gap: 3px;
		width: 159px;
		height: 25px;
		margin-top: 3px;
		padding-left: 12px;
		border-radius: 2px;
		background: linear-gradient(#5a9af8, #3c81f3 5px, #3c7cf0);
	}

	.task.pressed {
		background: #1e52b7;
		box-shadow: inset 1px 1px 2px #10327a;
	}

	.links {
		display: flex;
		align-items: center;
		gap: 4px;
		padding-right: 16px;
		color: #7eaaf4;
	}

	.links span {
		padding-bottom: 10px;
		color: #c0d8ff;
		font-size: 14px;
	}

	.tray {
		display: flex;
		align-items: center;
		gap: 2px;
		width: 308px;
		padding-left: 10px;
		border-left: 1px solid #0a4fae;
		background: linear-gradient(#2ab4f8, #1298ec 4px, #118ee8 24px, #0c70c8);
	}

	.tray time {
		padding-left: 4px;
	}
</style>
